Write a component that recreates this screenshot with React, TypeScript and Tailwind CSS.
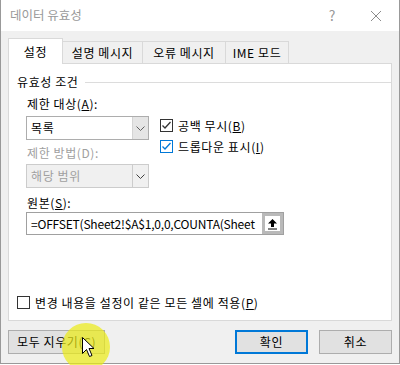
import type { ReactNode } from "react";

const font = { fontFamily: '"Noto Sans CJK KR", "Noto Sans", sans-serif' };

function Chevron({ color = "#606060" }: { color?: string }) {
  return (
    <svg width="9" height="5" viewBox="0 0 9 5">
      <path d="M0.5 0.5 L4.5 4.5 L8.5 0.5" fill="none" stroke={color} strokeWidth="1" />
    </svg>
  );
}

function Check({ color }: { color: string }) {
  return (
    <svg width="11" height="11" viewBox="0 0 11 11">
      <path d="M1.5 5.5 L4 8 L9.5 2" fill="none" stroke={color} strokeWidth="1.3" />
    </svg>
  );
}

function CheckRow({ checked, blue, children }: { checked: boolean; blue?: boolean; children: ReactNode }) {
  return (
    <div className="flex h-[13px] items-center gap-[5px]">
      <div
        className={`flex h-[13px] w-[13px] items-center justify-center border bg-white ${
          blue ? "border-[#0078d7]" : "border-[#333333]"
        }`}
      >
        {checked ? <Check color={blue ? "#0078d7" : "#333333"} /> : null}
      </div>
      <span className="text-[12px] leading-[16px] text-black">{children}</span>
    </div>
  );
}

const tabs = [
  { label: "설명 메시지", w: "w-[80px]" },
  { label: "오류 메시지", w: "w-[83px]" },
  { label: "IME 모드", w: "w-[63px]" },
];

export default function App() {
  return (
    <div className="relative h-[365px] w-[400px] overflow-hidden bg-white tracking-[0.6px]" style={font}>
      <div className="flex h-[364px] w-full flex-col border-x border-b border-[#999999]">
        {/* title bar */}
        <div className="flex h-[31px] items-center bg-white pl-[9px]">
          <span className="text-[12.5px] tracking-normal text-[#999999]">데이터 유효성</span>
          <span className="ml-auto mr-[34px] text-[14px] text-[#999999]">?</span>
          <svg width="12" height="12" viewBox="0 0 12 12" className="mr-[17px]">
            <path d="M1 1 L11 11 M11 1 L1 11" stroke="#8c8c8c" strokeWidth="1" />
          </svg>
        </div>

        <div className="flex flex-1 flex-col bg-[#f0f0f0]">
          {/* tabs */}
          <div className="flex pl-[7px] pt-[7px]">
            <div className="relative z-10 -mb-px flex h-[26px] w-[55px] items-center justify-center border-x border-t border-[#d9d9d9] bg-white text-[12px] text-black">
              설정
            </div>
            {tabs.map((t) => (
              <div
                key={t.label}
                className={`mt-[3px] flex h-[22px] items-center justify-center border-r border-t border-[#d9d9d9] bg-[#f0f0f0] text-[12px] text-black ${t.w}`}
              >
                {t.label}
              </div>
            ))}
          </div>

          {/* panel */}
          <div className="ml-[7px] flex h-[258px] w-[384px] flex-col border border-[#d9d9d9] bg-white">
            <div className="mt-[10px] flex items-center pl-[8px]">
              <span className="text-[12px] leading-[16px] text-black">유효성 조건</span>
              <div className="ml-[6px] h-px flex-1 bg-[#dcdcdc]" />
            </div>

            <div className="mt-[6px] flex pl-[17px]">
              <div className="flex w-[123px] flex-col">
                <div className="pl-px text-[12px] leading-[16px] text-black">
                  제한 대상(<span className="underline">A</span>):
                </div>
                <div className="mt-[4px] flex h-[24px] border border-[#adadad] bg-white">
                  <span className="flex-1 pl-[4px] text-[12px] leading-[22px] text-black">목록</span>
                  <div className="flex w-[16px] items-center justify-center border-l border-[#d4d4d4] bg-[#e5e5e5]">
                    <Chevron />
                  </div>
                </div>
                <div className="mt-[5px] pl-px text-[12px] leading-[16px] text-[#a0a0a0]">제한 방법(D):</div>
                <div className="mt-[3px] flex h-[24px] border border-[#cccccc] bg-[#f0f0f0]">
                  <span className="flex-1 pl-[4px] text-[12px] leading-[22px] text-[#a0a0a0]">해당 범위</span>
                  <div className="flex w-[16px] items-center justify-center border-l border-[#cccccc]">
                    <Chevron color="#404040" />
                  </div>
                </div>
              </div>
              <div className="ml-[11px] flex flex-col gap-[8px] pt-[23px]">
                <CheckRow checked>
                  공백 무시(<span className="underline">B</span>)
                </CheckRow>
                <CheckRow checked blue>
                  드롭다운 표시(<span className="underline">I</span>)
                </CheckRow>
              </div>
            </div>

            <div className="mt-[7px] pl-[18px] text-[12px] leading-[16px] text-black">
              원본(<span className="underline">S</span>):
            </div>
            <div className="ml-[17px] mt-px flex h-[23px] w-[258px] border border-[#a0a0a0] bg-white">
              <span className="flex-1 overflow-hidden whitespace-nowrap pl-[4px] text-[12px] leading-[21px] tracking-[-0.2px] text-black">
                =OFFSET(Sheet2!$A$1,0,0,COUNTA(Sheet
              </span>
              <div className="flex w-[21px] items-center justify-center border-[3px] border-[#b9b9b9] bg-white">
                <svg width="11" height="12" viewBox="0 0 11 12">
                  <path d="M5.5 1 L10 5.5 L7 5.5 L7 9 L4 9 L4 5.5 L1 5.5 Z" fill="#000" />
                  <path d="M1 11 L10 11" stroke="#000" strokeWidth="1" />
                </svg>
              </div>
            </div>

            <div className="mb-[11px] mt-auto pl-[8px]">
              <CheckRow checked={false}>
                변경 내용을 설정이 같은 모든 셀에 적용(<span className="underline">P</span>)
              </CheckRow>
            </div>
          </div>

          {/* buttons */}
          <div className="mt-[9px] flex pl-[7px]">
            <div className="flex h-[24px] w-[97px] items-center border border-[#adadad] bg-[#e1e1e1] pl-[8px] text-[12px] text-black">
              모두 지우기(C)
            </div>
            <div className="ml-[130px] flex h-[24px] w-[73px] items-center justify-center border-2 border-[#0078d7] bg-[#e1e1e1] text-[12px] text-black">
              확인
            </div>
            <div className="ml-[11px] flex h-[24px] w-[73px] items-center justify-center border border-[#adadad] bg-[#e1e1e1] text-[12px] text-black">
              취소
            </div>
          </div>
        </div>
      </div>

      {/* cursor highlight */}
      <div className="absolute left-[62px] top-[323px] h-[48px] w-[48px] rounded-full bg-[rgba(235,235,20,0.7)]" />
      <svg className="absolute left-[82px] top-[337px]" width="13" height="21" viewBox="0 0 13 21">
        <path d="M0.5 0.5 L0.5 16.5 L4.5 12.5 L7.5 19.5 L10 18.5 L7 11.5 L12 11.5 Z" fill="#fff" stroke="#000" strokeWidth="1" />
      </svg>
    </div>
  );
}
